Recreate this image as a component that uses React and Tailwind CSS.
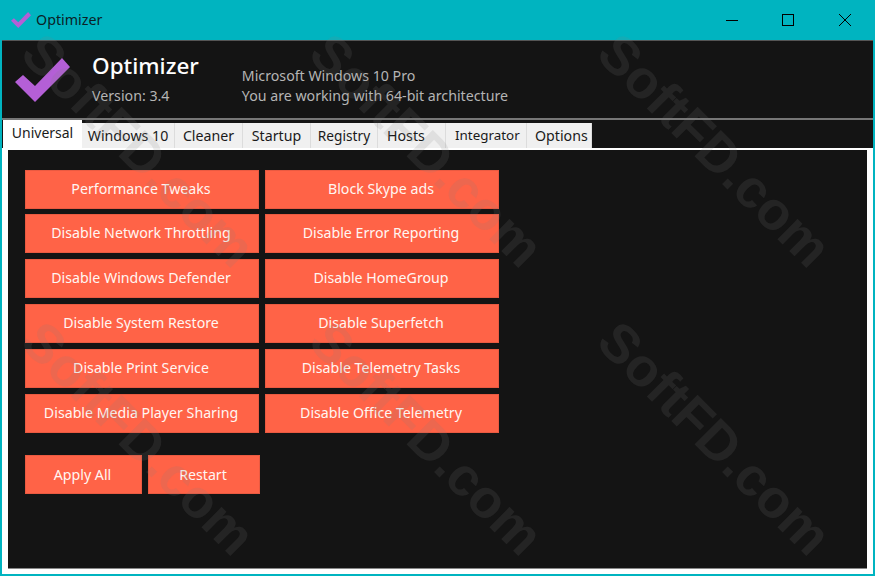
import React from 'react';

const font = "font-['Noto_Sans','Open_Sans',sans-serif]";

const tabs = [
  { label: 'Windows 10', width: 'w-[93px]', text: 'text-[14.2px] text-center' },
  { label: 'Cleaner', width: 'w-[68px]', text: 'text-[14.2px] text-center' },
  { label: 'Startup', width: 'w-[68px]', text: 'text-[14.2px] text-center' },
  { label: 'Registry', width: 'w-[67px]', text: 'text-[13.7px] text-center' },
  { label: 'Hosts', width: 'w-[68px]', text: 'text-[14.2px] text-left pl-[9px]' },
  { label: 'Integrator', width: 'w-[81px]', text: 'text-[13.4px] text-left pl-[9px]' },
  { label: 'Options', width: 'w-[65px]', text: 'text-[14.2px] text-left pl-[8px]' },
];

const leftButtons = [
  'Performance Tweaks',
  'Disable Network Throttling',
  'Disable Windows Defender',
  'Disable System Restore',
  'Disable Print Service',
  'Disable Media Player Sharing',
];

const rightButtons = [
  'Block Skype ads',
  'Disable Error Reporting',
  'Disable HomeGroup',
  'Disable Superfetch',
  'Disable Telemetry Tasks',
  'Disable Office Telemetry',
];

const marks = [
  'left-[-21px] top-[123px]',
  'left-[267px] top-[123px]',
  'left-[555px] top-[123px]',
  'left-[-21px] top-[411px]',
  'left-[267px] top-[411px]',
  'left-[555px] top-[411px]',
];

const CheckLogo = ({ className }) => (
  <svg viewBox="0 0 55 44" className={className}>
    <path d="M0 24 L8 17 L20 28 L47 0 L55 9 L20 44 Z" fill="#b45fd6" />
  </svg>
);

const ActionButton = ({ label, width = 'w-[234px]' }) => (
  <button className={`${width} h-[39px] shrink-0 pr-[2px] bg-[#ff6347] border border-[#ea5a41] text-[#fff6f2] text-[14.2px] leading-none first:-mb-px`}>
    {label}
  </button>
);

export default function App() {
  return (
    <div className={`relative w-[875px] h-[576px] overflow-hidden bg-[#00b4c0] ${font}`}>
      <div className="h-[40px] flex items-center pl-[11px]">
        <CheckLogo className="w-[20px] h-[16px]" />
        <span className="ml-[5px] text-[14.25px] text-[#0b2226]">Optimizer</span>
        <div className="ml-auto flex items-center pr-[24px]">
          <div className="w-[12px] h-px bg-black" />
          <div className="ml-[44px] w-[12px] h-[12px] border border-black" />
          <svg viewBox="0 0 12 12" className="ml-[45px] w-[12px] h-[12px]">
            <path d="M0 0 L12 12 M12 0 L0 12" stroke="#000" strokeWidth="1" />
          </svg>
        </div>
      </div>

      <div className="mx-[2px] h-[534px] bg-white flex flex-col">
        <div className="h-[78px] bg-[#141414] border-t border-[#555] flex items-start">
          <CheckLogo className="ml-[13px] mt-[17px] w-[55px] h-[44px]" />
          <div className="ml-[22px] mt-[10px]">
            <div className="text-[22.5px] leading-[30px] font-medium text-white">Optimizer</div>
            <div className="mt-[5px] text-[14.2px] leading-[20px] text-[#b5b5b5]">Version: 3.4</div>
          </div>
          <div className="ml-[43px] mt-[25px] text-[14.2px] leading-[20px] text-[#b5b5b5]">
            <div>Microsoft Windows 10 Pro</div>
            <div>You are working with 64-bit architecture</div>
          </div>
        </div>
        <div className="h-[2px] bg-[#777]" />
        <div className="h-[28px] bg-[#141414] flex items-end">
          <div className="ml-[1px] w-[79px] h-[28px] bg-white text-[#1a1a1a] text-[14px] leading-[26px] text-center">
            Universal
          </div>
          {tabs.map((tab) => (
            <div
              key={tab.label}
              className={`${tab.width} ${tab.text} h-[25px] bg-[#f0f0f0] border-r border-[#dcdcdc] text-[#1a1a1a] leading-[25px]`}
            >
              {tab.label}
            </div>
          ))}
        </div>
        <div className="h-[2px] bg-white" />
        <div className="mx-[6px] h-[419px] bg-[#141414] border-b border-[#888] pl-[17px] pt-[20px]">
          <div className="flex gap-[6px]">
            <div className="flex flex-col gap-[6px]">
              {leftButtons.map((label) => (
                <ActionButton key={label} label={label} />
              ))}
            </div>
            <div className="flex flex-col gap-[6px]">
              {rightButtons.map((label) => (
                <ActionButton key={label} label={label} />
              ))}
            </div>
          </div>
          <div className="mt-[22px] flex gap-[6px]">
            <ActionButton label="Apply All" width="w-[117px] !mb-0 pt-[2px]" />
            <ActionButton label="Restart" width="w-[112px] pt-[2px]" />
          </div>
        </div>
      </div>

      {marks.map((pos) => (
        <div
          key={pos}
          className={`absolute ${pos} w-[320px] text-center rotate-45 font-['Liberation_Sans',sans-serif] text-[54px] leading-none font-bold text-[#808080]/[0.15] pointer-events-none whitespace-nowrap`}
        >
          SoftFD.com
        </div>
      ))}
    </div>
  );
}
